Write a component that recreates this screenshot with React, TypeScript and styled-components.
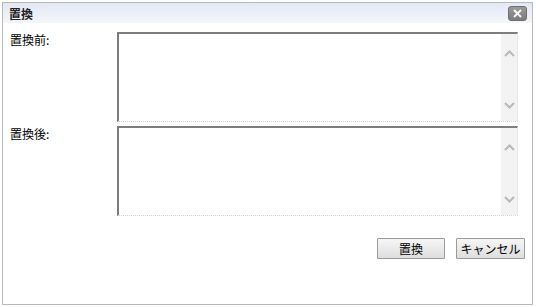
import styled, { createGlobalStyle } from 'styled-components'

const GlobalStyle = createGlobalStyle`
	html, body {
		margin: 0;
		padding: 0;
		background: #fff;
	}
	body {
		font-family: "Noto Sans CJK JP", "Liberation Sans", sans-serif;
		font-size: 12px;
		color: #000;
	}
`

function Chevron({ up }: { up?: boolean }) {
	return (
		<svg width="11" height="7" viewBox="0 0 11 7">
			<path
				d={up ? 'M1 6 L5.5 1.5 L10 6' : 'M1 1 L5.5 5.5 L10 1'}
				fill="none"
				stroke="#b8b8b8"
				strokeWidth="2"
			/>
		</svg>
	)
}

function Field({ label }: { label: string }) {
	return (
		<Row>
			<Label>{label}</Label>
			<Box>
				<Input />
				<Track>
					<Chevron up />
					<Chevron />
				</Track>
			</Box>
		</Row>
	)
}

export default function App() {
	return (
		<>
			<GlobalStyle />
			<Dialog>
				<TitleBar>
					<h1>置換</h1>
					<CloseButton aria-label="close">
						<svg width="9" height="9" viewBox="0 0 9 9">
							<path
								d="M1 1 L8 8 M8 1 L1 8"
								stroke="#fff"
								strokeWidth="1.8"
							/>
						</svg>
					</CloseButton>
				</TitleBar>
				<Body>
					<Field label="置換前:" />
					<Field label="置換後:" />
					<Actions>
						<Button $width={68}>置換</Button>
						<Button $width={69}>キャンセル</Button>
					</Actions>
				</Body>
			</Dialog>
		</>
	)
}

const Dialog = styled.div`
	margin: 2px 0 0 2px;
	width: 529px;
	height: 301px;
	border: 1px solid #b9b9b9;
	display: flex;
	flex-direction: column;
	background: #fff;
`

const TitleBar = styled.header`
	height: 20px;
	display: flex;
	align-items: center;
	justify-content: space-between;
	padding: 0 5px 0 6px;
	background: linear-gradient(to bottom, #e3e8f5, #f4f6fb);

	h1 {
		margin: 0;
		font-size: 12px;
		font-weight: bold;
		color: #222;
	}
`

const CloseButton = styled.button`
	width: 19px;
	height: 15px;
	padding: 0;
	border: 1px solid #6e6e6e;
	border-radius: 3px;
	background: linear-gradient(to bottom, #9a9a9a, #7b7b7b);
	display: flex;
	align-items: center;
	justify-content: center;
`

const Body = styled.div`
	flex: 1;
	display: flex;
	flex-direction: column;
	padding: 9px 14px 0 7px;
	gap: 4px;
`

const Row = styled.div`
	display: flex;
	align-items: flex-start;
`

const Label = styled.div`
	width: 107px;
	padding-top: 1px;
	line-height: 14px;
`

const Box = styled.div`
	flex: 1;
	height: 90px;
	display: flex;
	box-sizing: border-box;
	border-top: 2px solid #7d7d7d;
	border-left: 2px solid #7d7d7d;
	border-right: 1px solid #e8e8e8;
	border-bottom: 1px dotted #d4d4d4;
	background: #fff;
`

const Input = styled.textarea`
	flex: 1;
	border: none;
	outline: none;
	resize: none;
	padding: 2px;
	font: inherit;
	background: transparent;
`

const Track = styled.div`
	width: 16px;
	display: flex;
	flex-direction: column;
	align-items: center;
	justify-content: space-between;
	padding: 16px 0 12px;
	background-color: #f8f8f8;
	background-image: radial-gradient(#ececec 0.6px, transparent 0.8px);
	background-size: 2px 2px;
`

const Actions = styled.div`
	display: flex;
	justify-content: flex-end;
	gap: 11px;
	margin-top: 18px;
	margin-right: -7px;
`

const Button = styled.button<{ $width: number }>`
	width: ${(p) => p.$width}px;
	height: 21px;
	padding: 0;
	font: inherit;
	color: #000;
	border: 1px solid #9a9a9a;
	border-radius: 1px;
	background: linear-gradient(to bottom, #f6f6f6, #dedede);
`
